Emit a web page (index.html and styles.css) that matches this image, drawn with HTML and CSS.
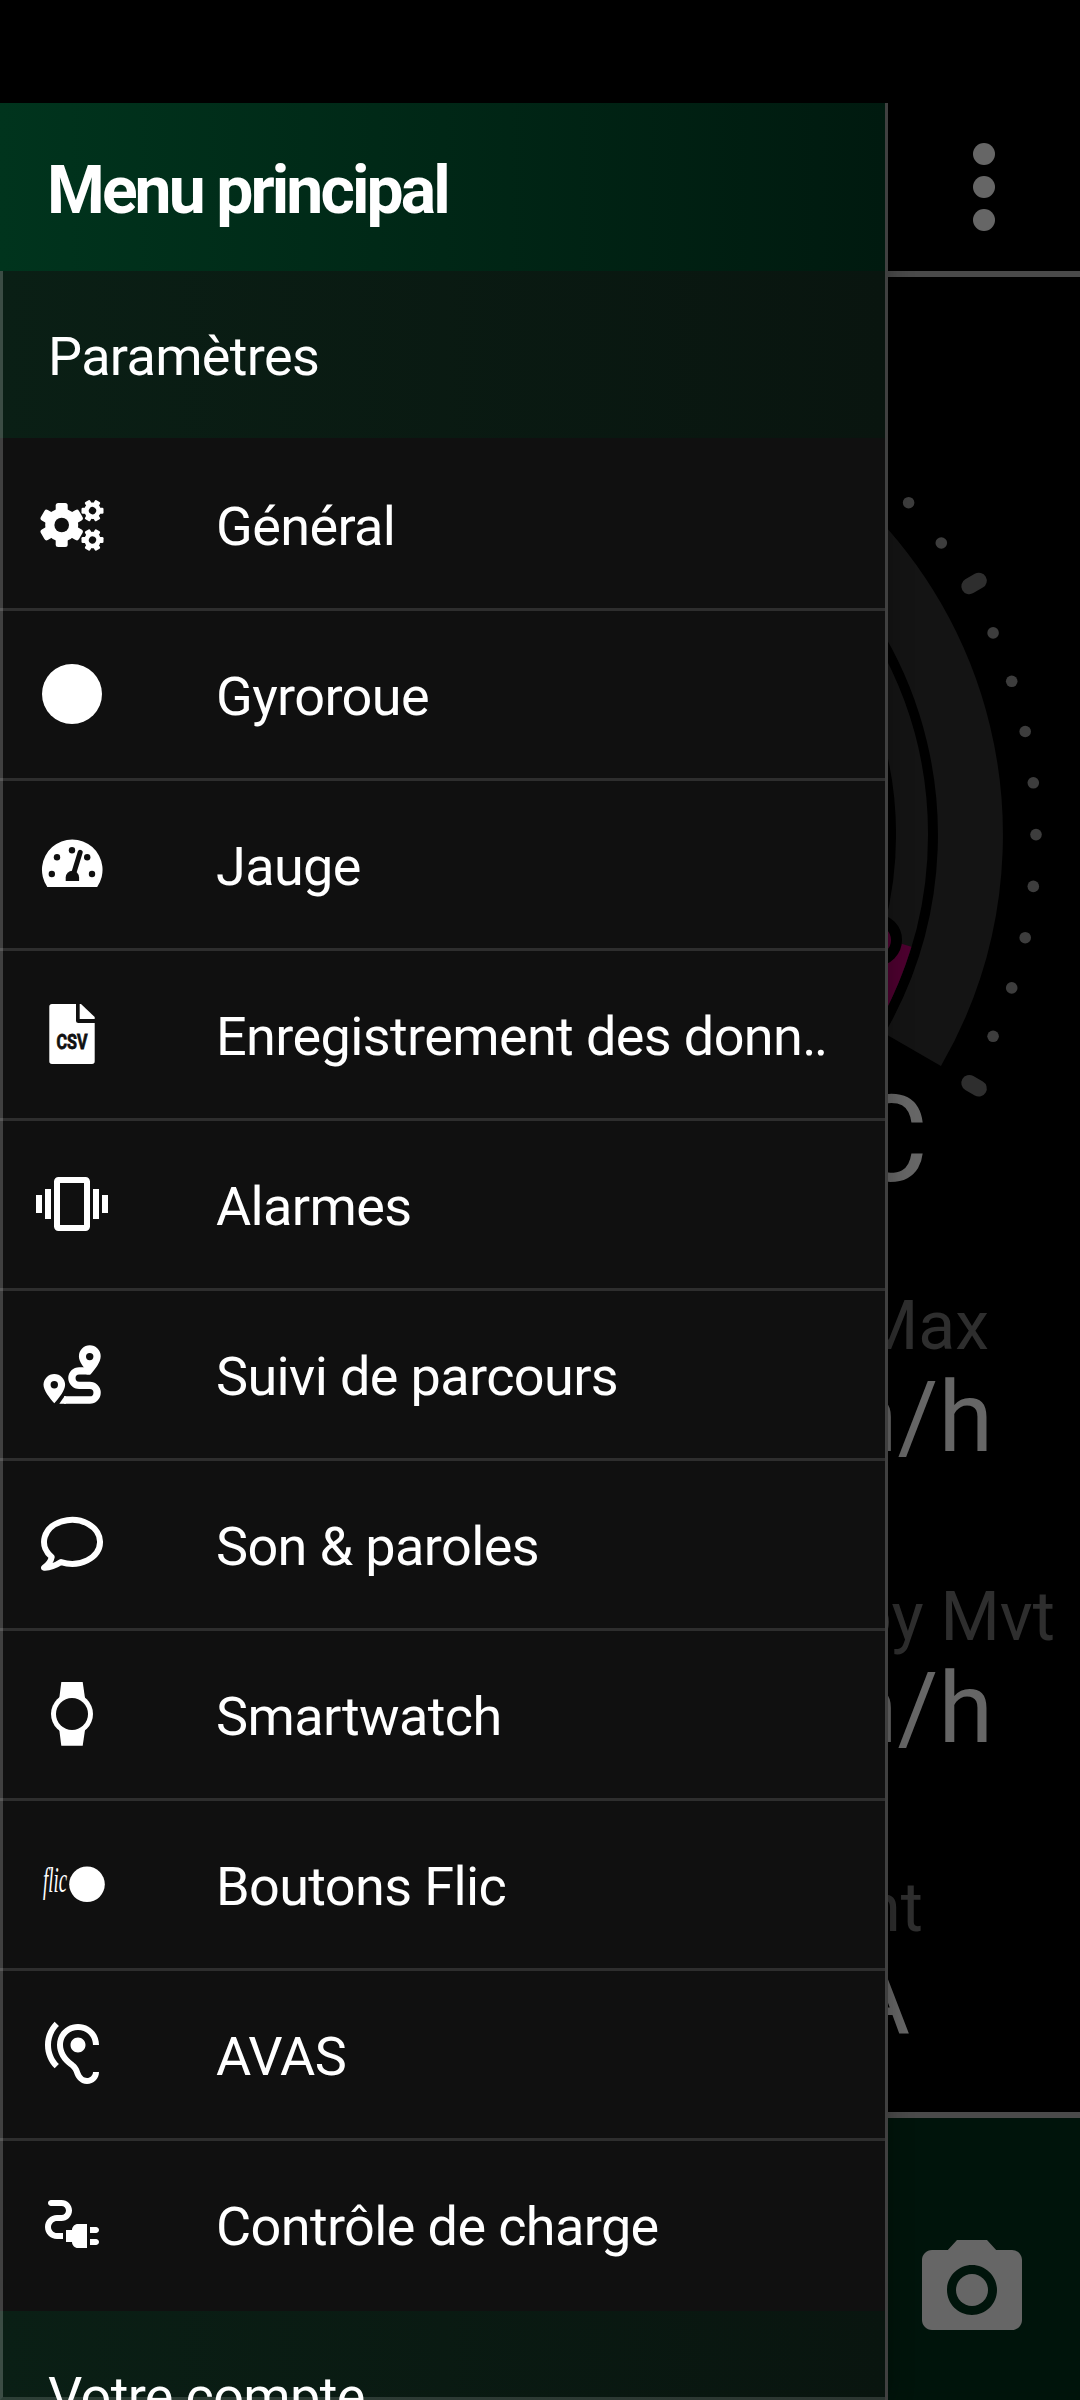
FILE: index.html
```html
<!DOCTYPE html>
<html lang="fr">
<head>
    <meta charset="UTF-8">
    <meta name="viewport" content="width=device-width, initial-scale=1.0">
    <title>Menu principal</title>
    <link rel="stylesheet" href="styles.css">
</head>
<body>
    <div class="dashboard">
        <div class="toolbar">
            <div class="more">
                <span></span>
                <span></span>
                <span></span>
            </div>
        </div>

        <svg class="gauge" viewBox="0 277 1080 812">
            <g fill="none" stroke="#141414">
                <path stroke-width="65" d="M540 404.1A430.5 430.5 0 0 1 912.8 1049.8"/>
                <path stroke-width="32" d="M540 462.6A372 372 0 0 1 862.2 1020.6"/>
            </g>
            <path fill="none" stroke="#4d002f" stroke-width="32" d="M896.1 942.2A372 372 0 0 1 862.2 1020.6"/>
            <circle cx="876" cy="940" r="20.5" fill="#4d002f" stroke="#000" stroke-width="11"/>
            <g class="ticks">
                <circle cx="908.6" cy="502.7" r="5.8"/>
                <circle cx="941.3" cy="543" r="5.8"/>
                <circle cx="993.1" cy="632.9" r="5.8"/>
                <circle cx="1011.7" cy="681.3" r="5.8"/>
                <circle cx="1025.2" cy="731.5" r="5.8"/>
                <circle cx="1033.3" cy="782.8" r="5.8"/>
                <circle cx="1036" cy="834.6" r="5.8"/>
                <circle cx="1033.3" cy="886.4" r="5.8"/>
                <circle cx="1025.2" cy="937.7" r="5.8"/>
                <circle cx="1011.7" cy="987.9" r="5.8"/>
                <circle cx="993.1" cy="1036.3" r="5.8"/>
            </g>
            <g class="ticks-major">
                <path d="M969.3 586.2L978.8 580.7"/>
                <path d="M969.3 1083L978.8 1088.5"/>
            </g>
        </svg>

        <div class="temperature">°C</div>
        <div class="stat stat-max">
            <div class="stat-label">Max</div>
            <div class="stat-value">km/h</div>
        </div>
        <div class="stat stat-avg">
            <div class="stat-label">oy Mvt</div>
            <div class="stat-value">km/h</div>
        </div>
        <div class="stat stat-current">
            <div class="stat-label">nt</div>
            <div class="stat-value">A</div>
        </div>

        <div class="bottom-bar">
            <svg class="camera" viewBox="0 0 24 24">
                <circle cx="12" cy="12" r="3.2"/>
                <path d="M9 2L7.17 4H4c-1.1 0-2 .9-2 2v12c0 1.1.9 2 2 2h16c1.1 0 2-.9 2-2V6c0-1.1-.9-2-2-2h-3.17L15 2H9zm3 15c-2.76 0-5-2.24-5-5s2.24-5 5-5 5 2.24 5 5-2.24 5-5 5z"/>
            </svg>
        </div>
    </div>

    <div class="drawer">
        <div class="drawer-header">Menu principal</div>
        <div class="drawer-body">
            <div class="section">Paramètres</div>
            <ul class="menu">
                <li>
                    <svg class="icon" viewBox="0 0 72 72">
                        <defs>
                            <g id="gear">
                                <circle r="16.5"/>
                                <rect x="-6" y="-22" width="12" height="44" rx="2.5"/>
                                <rect x="-6" y="-22" width="12" height="44" rx="2.5" transform="rotate(60)"/>
                                <rect x="-6" y="-22" width="12" height="44" rx="2.5" transform="rotate(120)"/>
                                <circle class="hole" r="7.3"/>
                            </g>
                        </defs>
                        <use href="#gear" transform="translate(25.7 37)"/>
                        <use href="#gear" transform="translate(56.5 22.7) rotate(30) scale(.5)"/>
                        <use href="#gear" transform="translate(56.5 52) rotate(30) scale(.5)"/>
                    </svg>
                    <span>Général</span>
                </li>
                <li>
                    <svg class="icon" viewBox="0 0 72 72">
                        <circle cx="36" cy="36" r="30"/>
                    </svg>
                    <span>Gyroroue</span>
                </li>
                <li>
                    <svg class="icon" viewBox="0 0 72 72">
                        <path d="M11.3 59A30.3 30.3 0 1 1 61.2 59z"/>
                        <g class="hole">
                            <circle cx="36" cy="22.3" r="3.2"/>
                            <circle cx="21" cy="29.3" r="3.2"/>
                            <circle cx="51.2" cy="29.3" r="3.2"/>
                            <circle cx="15.8" cy="46" r="3.2"/>
                            <circle cx="56" cy="46" r="3.2"/>
                        </g>
                        <path class="line" stroke-width="9" d="M44.2 24L37.5 45"/>
                        <path class="line-dark" stroke-width="5" d="M44.2 24.3L37.5 46"/>
                        <path class="hole" d="M29.7 53v-3.5a6.7 6.7 0 0 1 13.4 0V53z"/>
                    </svg>
                    <span>Jauge</span>
                </li>
                <li>
                    <svg class="icon" viewBox="0 0 72 72">
                        <path d="M16 6H40V22.5Q40 25 42.5 25H58.7V63.3Q58.7 66 56 66H16Q13.3 66 13.3 63.3V8.7Q13.3 6 16 6z"/>
                        <path d="M43.7 6H45L58.7 19V21H43.7z"/>
                        <text class="csv" x="20.5" y="50.7" textLength="31" lengthAdjust="spacingAndGlyphs">CSV</text>
                    </svg>
                    <span>Enregistrement des donn<span class="dots">..</span></span>
                </li>
                <li>
                    <svg class="icon" viewBox="0 0 24 24">
                        <path d="M0 15h2V9H0v6zm3 2h2V7H3v10zm19-8v6h2V9h-2zm-3 8h2V7h-2v10zM16.5 3h-9C6.67 3 6 3.67 6 4.5v15c0 .83.67 1.5 1.5 1.5h9c.83 0 1.5-.67 1.5-1.5v-15c0-.83-.67-1.5-1.5-1.5zM16 19H8V5h8v14z"/>
                    </svg>
                    <span>Alarmes</span>
                </li>
                <li>
                    <svg class="icon" viewBox="0 0 72 72">
                        <path class="line butt" stroke-width="7.3" d="M54 32.8H43.2a7.3 7.3 0 0 0 0 14.6H53.8a7.3 7.3 0 0 1 0 14.6H28"/>
                        <path d="M28.5 58.35L23.3 65.65H30V58.35z"/>
                        <path d="M53.8 7.3A10.9 10.9 0 0 1 64.7 18.2C64.7 24.5 59 31 54.5 36.4H50L53 35C48.5 30 42.9 24.5 42.9 18.2A10.9 10.9 0 0 1 53.8 7.3z"/>
                        <path d="M18.3 36A10.8 10.8 0 0 1 29.1 46.8C29.1 52.5 23 60 18.3 65.3C13.6 60 7.5 52.5 7.5 46.8A10.8 10.8 0 0 1 18.3 36z"/>
                        <circle class="hole" cx="53.7" cy="18.6" r="3.7"/>
                        <circle class="hole" cx="18.3" cy="46.7" r="3.7"/>
                    </svg>
                    <span>Suivi de parcours</span>
                </li>
                <li>
                    <svg class="icon" viewBox="0 0 72 72">
                        <path class="line" stroke-width="6" d="M15.7 49A28 22 0 1 1 25 54.1C19 58 13 60 8 59.7C12 57 15 53 15.7 49z"/>
                    </svg>
                    <span>Son &amp; paroles</span>
                </li>
                <li>
                    <svg class="icon" viewBox="0 0 72 72">
                        <path d="M25.3 4H46.7L49 20V52L46.7 67.7H25.3L23.3 52V20z"/>
                        <circle cx="36" cy="36" r="21"/>
                        <circle class="hole" cx="36" cy="36" r="16"/>
                    </svg>
                    <span>Smartwatch</span>
                </li>
                <li>
                    <svg class="icon" viewBox="0 0 72 72">
                        <text class="flic" x="7" y="43.5" textLength="24" lengthAdjust="spacingAndGlyphs">flic</text>
                        <circle cx="51" cy="36.3" r="17.8"/>
                    </svg>
                    <span>Boutons Flic</span>
                </li>
                <li>
                    <svg class="icon" viewBox="0 0 24 24">
                        <path d="M17 20c-.29 0-.56-.06-.76-.15-.71-.37-1.21-.88-1.71-2.38-.51-1.56-1.47-2.29-2.39-3-.79-.61-1.61-1.24-2.32-2.53C9.29 10.98 9 9.93 9 9c0-2.8 2.2-5 5-5s5 2.2 5 5h2c0-3.93-3.07-7-7-7S7 5.07 7 9c0 1.26.38 2.65 1.07 3.9.91 1.65 1.98 2.48 2.85 3.15.81.62 1.39 1.07 1.71 2.05.6 1.82 1.37 2.84 2.73 3.55.51.23 1.07.35 1.64.35 2.21 0 4-1.79 4-4h-2c0 1.1-.9 2-2 2zM7.64 2.64L6.22 1.22C4.23 3.21 3 5.96 3 9s1.23 5.79 3.22 7.78l1.41-1.41C6.01 13.74 5 11.49 5 9s1.01-4.74 2.64-6.36zM11.5 9c0 1.38 1.12 2.5 2.5 2.5s2.5-1.12 2.5-2.5-1.12-2.5-2.5-2.5-2.5 1.12-2.5 2.5z"/>
                    </svg>
                    <span>AVAS</span>
                </li>
                <li>
                    <svg class="icon" viewBox="0 0 24 24">
                        <path d="M21 14c0-.55-.45-1-1-1h-2v2h2c.55 0 1-.45 1-1zM20 17h-2v2h2c.55 0 1-.45 1-1s-.45-1-1-1zM12 14h-2v4h2c0 1.1.9 2 2 2h3v-8h-3c-1.1 0-2 .9-2 2z"/>
                        <path d="M5 13c0-1.1.9-2 2-2h1.5c1.93 0 3.5-1.57 3.5-3.5S10.43 4 8.5 4H5c-.55 0-1 .45-1 1s.45 1 1 1h3.5c.83 0 1.5.67 1.5 1.5S9.33 9 8.5 9H7c-2.21 0-4 1.79-4 4s1.79 4 4 4h2v-2H7c-1.1 0-2-.9-2-2z"/>
                    </svg>
                    <span>Contrôle de charge</span>
                </li>
            </ul>
            <div class="section">Votre compte</div>
        </div>
    </div>
</body>
</html>
```

FILE: styles.css
```css
* {
    box-sizing: border-box;
}

body {
    position: relative;
    width: 1080px;
    height: 2400px;
    margin: 0;
    overflow: hidden;
    background-color: #000;
    font-family: Roboto, sans-serif;
    color: #fff;
}

/* Dimmed screen behind the menu */
.dashboard {
    display: flex;
    flex-direction: column;
    height: 2400px;
    padding-top: 103px;
}

.toolbar {
    display: flex;
    justify-content: flex-end;
    height: 174px;
    padding: 40px 85px 0 0;
    border-bottom: 6px solid #4a4a4a;
}

.more {
    display: flex;
    flex-direction: column;
    gap: 11px;
}

.more span {
    width: 22px;
    height: 22px;
    border-radius: 50%;
    background-color: #666;
}

.gauge {
    flex: none;
    display: block;
    width: 1080px;
    height: 812px;
    overflow: visible;
}

.ticks {
    fill: #3d3d3d;
}

.ticks-major {
    stroke: #2e2e2e;
    stroke-width: 16;
    stroke-linecap: round;
}

.temperature {
    height: 100px;
    margin-bottom: 96px;
    padding: 1px 152px 0 0;
    font-size: 120px;
    line-height: 100px;
    text-align: right;
    color: #666;
}

.stat {
    margin-bottom: 109px;
    text-align: right;
    white-space: nowrap;
}

.stat-label {
    font-size: 68px;
    line-height: 82px;
    color: #2e2e2e;
}

.stat-value {
    padding-top: 1px;
    font-size: 99px;
    line-height: 99px;
    color: #666;
}

.stat-max .stat-label {
    padding-right: 91px;
}

.stat-avg .stat-label {
    padding-right: 25px;
}

.stat-max .stat-value,
.stat-avg .stat-value {
    padding-right: 87px;
}

.stat-current {
    margin-bottom: 0;
}

.stat-current .stat-label {
    padding-right: 157px;
}

.stat-current .stat-value {
    padding-right: 170px;
}

.bottom-bar {
    display: flex;
    flex: none;
    justify-content: flex-end;
    height: 288px;
    margin-top: auto;
    padding: 112px 48px 0 0;
    border-top: 6px solid #4a4a4a;
    background-color: #00140b;
}

.camera {
    width: 120px;
    height: 120px;
    fill: #666;
}

/* Menu */
.drawer {
    position: absolute;
    top: 103px;
    left: 0;
    width: 888px;
    height: 2297px;
    border-right: 3px solid #404040;
    background-color: #101010;
    box-shadow: 0 0 24px rgba(0, 0, 0, 0.3);
    overflow: hidden;
}

.drawer-header {
    height: 168px;
    padding: 7px 0 0 47px;
    background: linear-gradient(to right, #00341d, #001a0f);
    font-size: 66px;
    font-weight: bold;
    line-height: 161px;
    letter-spacing: -2.9px;
}

.drawer-body {
    position: relative;
    height: 2129px;
    overflow: hidden;
}

/* translucent frame drawn over the list */
.drawer-body::after {
    content: "";
    position: absolute;
    inset: 0;
    border-left: 3px solid rgba(255, 255, 255, 0.2);
    border-bottom: 3px solid rgba(255, 255, 255, 0.14);
}

.section {
    height: 167px;
    padding: 4px 0 0 48px;
    background: linear-gradient(to right, #0a1f15, #09150f);
    font-size: 54px;
    line-height: 163px;
    letter-spacing: -0.65px;
}

.menu {
    margin: 0;
    padding: 3px 0 0;
    list-style: none;
}

.menu li {
    display: flex;
    align-items: flex-start;
    gap: 108px;
    height: 170px;
    padding-left: 36px;
    border-bottom: 3px solid #2e2e2e;
    font-size: 54px;
    line-height: 163px;
    letter-spacing: -0.62px;
    white-space: nowrap;
}

.menu li:last-child {
    border-bottom: none;
}

.menu span {
    padding-top: 4px;
}

.menu .dots {
    letter-spacing: -2.4px;
}

.icon {
    flex: none;
    width: 72px;
    height: 72px;
    margin-top: 47px;
    fill: #fff;
    letter-spacing: 0;
}

.icon .hole {
    fill: #101010;
}

.icon .line {
    fill: none;
    stroke: #fff;
    stroke-linecap: round;
    stroke-linejoin: round;
}

.icon .butt {
    stroke-linecap: butt;
}

.icon .line-dark {
    stroke: #101010;
    stroke-linecap: round;
}

.icon .csv {
    fill: #101010;
    stroke: #101010;
    stroke-width: 0.8;
    font-size: 21px;
    font-weight: bold;
}

.icon .flic {
    font-family: "Liberation Serif", serif;
    font-size: 35px;
    font-style: italic;
}
```
